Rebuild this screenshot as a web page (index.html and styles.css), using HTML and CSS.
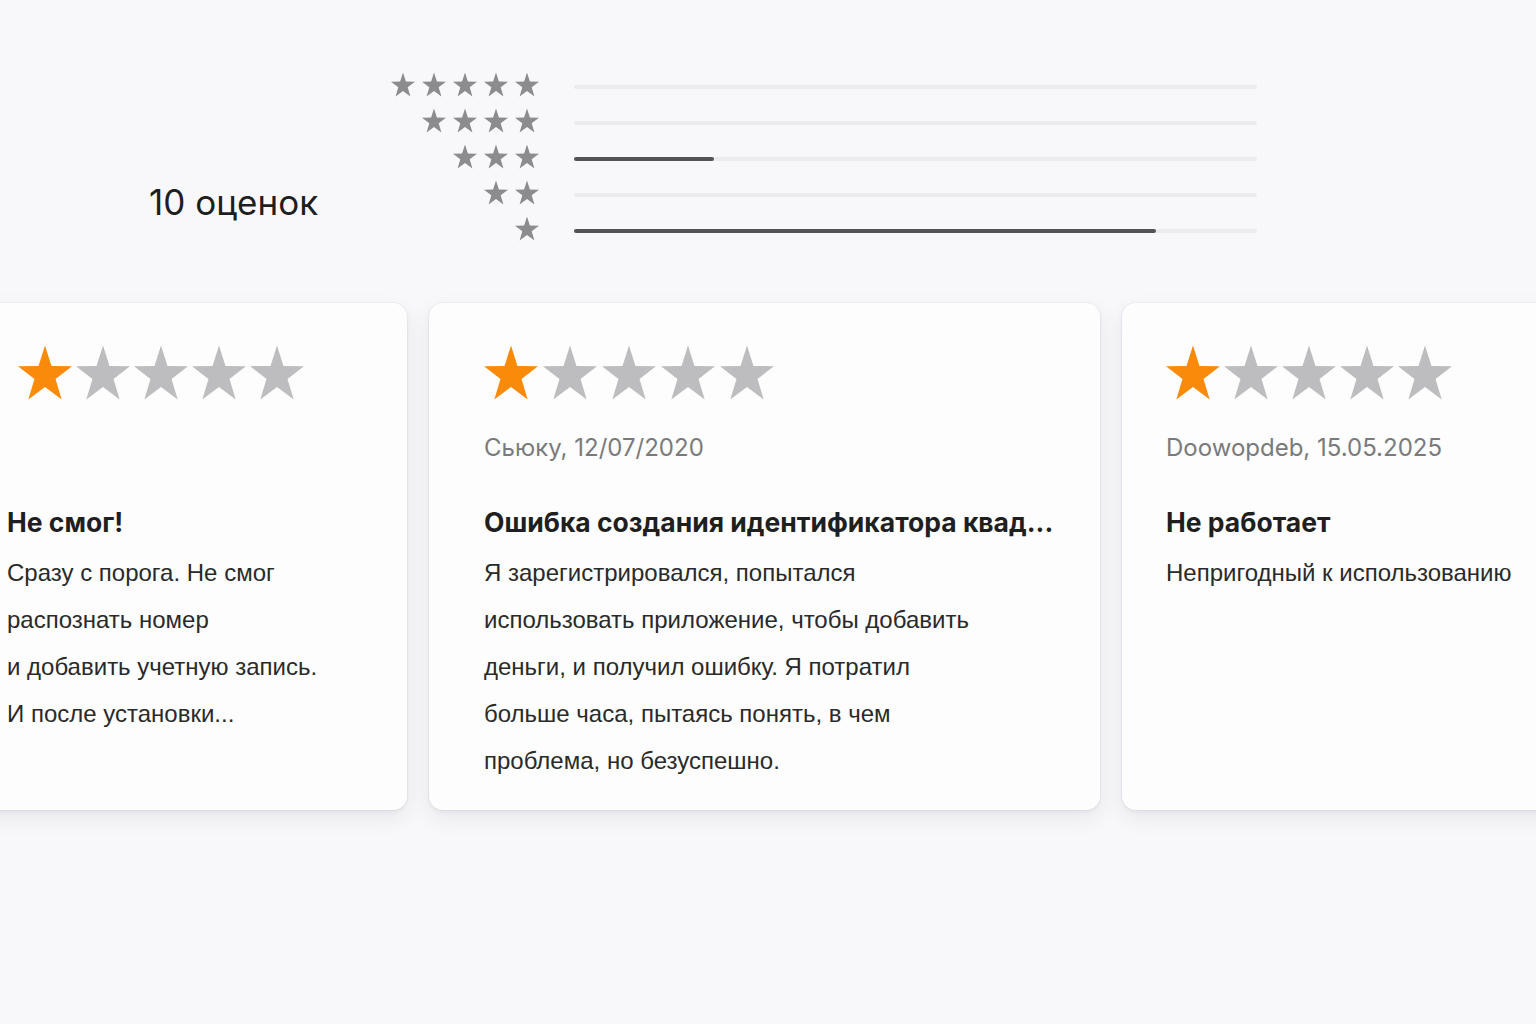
FILE: index.html
```html
<!DOCTYPE html>
<html lang="ru">
<head>
  <meta charset="UTF-8" />
  <meta name="viewport" content="width=device-width, initial-scale=1.0"/>
  <title>Оценки и отзывы</title>
  <link rel="stylesheet" href="styles.css">
</head>
<body>
<svg class="sprite" xmlns="http://www.w3.org/2000/svg">
  <symbol id="star" viewBox="0 0 100 100">
    <path d="M50 0 L62 37.9 L100 38.2 L69.5 61.9 L80.9 100 L50 76.8 L19.1 100 L30.5 61.9 L0 38.2 L38 37.9 Z"/>
  </symbol>
</svg>

<section class="summary">
  <div class="summary-count">10 оценок</div>

  <div class="histogram">
    <div class="histogram-stars">
      <svg><use href="#star"/></svg><svg><use href="#star"/></svg><svg><use href="#star"/></svg><svg><use href="#star"/></svg><svg><use href="#star"/></svg>
    </div>
    <div class="bar"><span style="width: 0%"></span></div>

    <div class="histogram-stars">
      <svg><use href="#star"/></svg><svg><use href="#star"/></svg><svg><use href="#star"/></svg><svg><use href="#star"/></svg>
    </div>
    <div class="bar"><span style="width: 0%"></span></div>

    <div class="histogram-stars">
      <svg><use href="#star"/></svg><svg><use href="#star"/></svg><svg><use href="#star"/></svg>
    </div>
    <div class="bar"><span style="width: 20.5%"></span></div>

    <div class="histogram-stars">
      <svg><use href="#star"/></svg><svg><use href="#star"/></svg>
    </div>
    <div class="bar"><span style="width: 0%"></span></div>

    <div class="histogram-stars">
      <svg><use href="#star"/></svg>
    </div>
    <div class="bar"><span style="width: 85.2%"></span></div>
  </div>
</section>

<div class="reviews-viewport">
  <section class="reviews">
    <article class="card card-first">
      <div class="stars">
        <svg class="on"><use href="#star"/></svg><svg><use href="#star"/></svg><svg><use href="#star"/></svg><svg><use href="#star"/></svg><svg><use href="#star"/></svg>
      </div>
      <div class="meta"></div>
      <h3>Не смог!</h3>
      <p>Сразу с порога. Не смог<br>распознать номер<br>и добавить учетную запись.<br>И после установки...</p>
    </article>

    <article class="card">
      <div class="stars">
        <svg class="on"><use href="#star"/></svg><svg><use href="#star"/></svg><svg><use href="#star"/></svg><svg><use href="#star"/></svg><svg><use href="#star"/></svg>
      </div>
      <div class="meta">Сьюку, 12/07/2020</div>
      <h3>Ошибка создания идентификатора квад...</h3>
      <p>Я зарегистрировался, попытался<br>использовать приложение, чтобы добавить<br>деньги, и получил ошибку. Я потратил<br>больше часа, пытаясь понять, в чем<br>проблема, но безуспешно.</p>
    </article>

    <article class="card card-last">
      <div class="stars">
        <svg class="on"><use href="#star"/></svg><svg><use href="#star"/></svg><svg><use href="#star"/></svg><svg><use href="#star"/></svg><svg><use href="#star"/></svg>
      </div>
      <div class="meta">Doowopdeb, 15.05.2025</div>
      <h3>Не работает</h3>
      <p>Непригодный к использованию</p>
    </article>
  </section>
</div>
</body>
</html>
```

FILE: styles.css
```css
body {
  margin: 0;
  min-height: 100vh;
  background: #f8f8fa;
  font-family: "Liberation Sans", Arial, sans-serif;
  color: #222;
}
.sprite {
  display: none;
}

/* rating summary */
.summary {
  display: flex;
  align-items: flex-end;
  padding: 66px 0 0 149px;
}
.summary-count {
  width: 240px;
  padding-bottom: 24px;
  font-family: Inter, "Noto Sans", sans-serif;
  font-size: 35px;
  line-height: 40px;
  color: #1e1e1e;
}
.histogram {
  display: grid;
  grid-template-columns: 150px 683px;
  grid-auto-rows: 36px;
  column-gap: 35px;
  align-items: center;
}
.histogram-stars {
  display: flex;
  justify-content: flex-end;
  gap: 7px;
}
.histogram-stars svg {
  width: 24px;
  height: 25px;
  fill: #8c8c8e;
}
.bar {
  height: 4px;
  margin-top: 5px;
  border-radius: 2px;
  background: #ebebee;
}
.bar span {
  display: block;
  height: 100%;
  border-radius: 2px;
  background: #535355;
}

/* review cards, scrolled strip */
.reviews-viewport {
  overflow: hidden;
  padding: 57px 0 60px;
}
.reviews {
  display: flex;
  gap: 22px;
  margin-left: -48px;
}
.card {
  flex: none;
  box-sizing: border-box;
  width: 671px;
  height: 507px;
  padding: 42px 55px 0;
  background: #fdfdfd;
  border-radius: 14px;
  box-shadow: 0 0 0 1px rgba(40,40,80,0.03), 0 2px 4px rgba(40,40,80,0.06), 0 8px 22px rgba(40,40,80,0.08);
}
.card-first {
  width: 455px;
}
.card-first .stars {
  margin-left: 11px;
  gap: 4px;
}
.card-last {
  padding-left: 44px;
}
.card-last .stars {
  gap: 4px;
}
.stars {
  display: flex;
  gap: 5px;
}
.stars svg {
  width: 54px;
  height: 55px;
  fill: #bdbdbf;
}
.stars svg.on {
  fill: #fa8a0a;
}
.meta {
  height: 30px;
  margin-top: 33px;
  font-family: Inter, "Noto Sans", sans-serif;
  font-size: 24px;
  line-height: 30px;
  color: #7a7a7c;
}
h3 {
  margin: 43px 0 0;
  font-family: Inter, "Noto Sans", sans-serif;
  font-size: 26.5px;
  font-weight: 700;
  line-height: 32px;
  color: #1f1f1f;
  white-space: nowrap;
}
p {
  margin: 11px 0 0;
  font-size: 24px;
  line-height: 47px;
  color: #2a2a2a;
  white-space: nowrap;
}
```
